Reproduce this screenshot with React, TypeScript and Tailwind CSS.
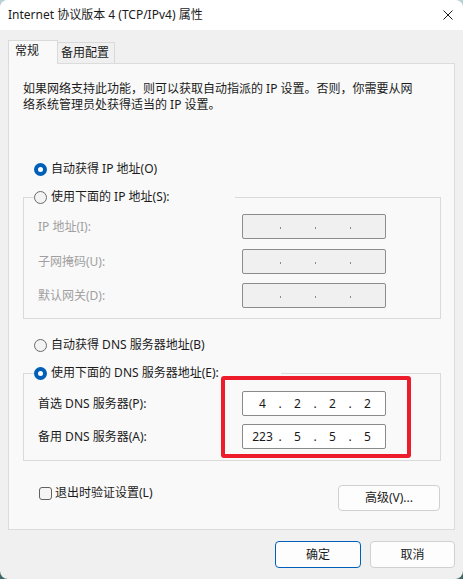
import React from "react";

const FONT = { fontFamily: '"Noto Sans", "Noto Sans CJK SC", sans-serif' };

function Radio({ checked }: { checked?: boolean }) {
  return checked ? (
    <span className="w-[13px] h-[13px] rounded-full bg-[#005fb8] flex items-center justify-center shrink-0">
      <span className="w-[5px] h-[5px] rounded-full bg-white" />
    </span>
  ) : (
    <span className="w-[13px] h-[13px] rounded-full border border-[#6a6a6a] bg-[#f3f3f3] shrink-0" />
  );
}

function IpField({ values, disabled }: { values?: string[]; disabled?: boolean }) {
  const segs = values ?? ["", "", "", ""];
  return (
    <div
      className={
        "w-[144px] h-[25px] rounded-[2px] border flex items-center pl-[4px] " +
        (disabled ? "bg-[#f0f0f0] border-[#8c8c8c]" : "bg-white border-[#8a8a8a]")
      }
    >
      {segs.map((v, i) => (
        <React.Fragment key={i}>
          <span className="w-[31px] text-center text-[12px] leading-[16px] text-[#1b1b1b]">{v}</span>
          {i < 3 &&
            (disabled ? (
              <span className="w-[4px] flex justify-center">
                <span className="w-[1px] h-[2px] bg-[#8a8a8a] mt-[2px]" />
              </span>
            ) : (
              <span className="w-[4px] text-center text-[12px] leading-[16px] text-[#1b1b1b]">.</span>
            ))}
        </React.Fragment>
      ))}
    </div>
  );
}

function Row({ label, disabled, values }: { label: string; disabled?: boolean; values?: string[] }) {
  return (
    <div className="flex items-center pl-[14px] h-[25px]">
      <span className={"w-[204px] text-[12px] leading-[16px] " + (disabled ? "text-[#a0a0a0]" : "text-[#1b1b1b]")}>
        {label}
      </span>
      <IpField values={values} disabled={disabled} />
    </div>
  );
}

export default function App() {
  return (
    <div className="w-[463px] h-[579px] bg-gradient-to-b from-[#b9d2d6] to-[#3d6868]" style={FONT}>
      <div className="w-[463px] h-[579px] rounded-[8px] overflow-hidden bg-[#f0f0f0] flex flex-col text-[#1b1b1b]">
        {/* title bar */}
        <div className="h-[30px] bg-white flex items-center justify-between pl-[8px] pr-[10px] shrink-0">
          <span className="text-[12px] leading-[16px] text-[#1b1b1b]">Internet 协议版本 4 (TCP/IPv4) 属性</span>
          <svg width="10" height="10" viewBox="0 0 10 10" className="mt-[-1px]">
            <path d="M0.5 0.5 L9.5 9.5 M9.5 0.5 L0.5 9.5" stroke="#1b1b1b" strokeWidth="1" fill="none" />
          </svg>
        </div>

        <div className="px-[8px] flex flex-col">
          {/* tabs */}
          <div className="flex items-end mt-[10px] h-[23px]">
            <div className="relative z-10 w-[50px] h-[24px] mb-[-1px] bg-[#f9f9f9] border border-b-0 border-[#d9d9d9] pl-[6px] pt-[2px] text-[12px] leading-[16px]">
              常规
            </div>
            <div className="w-[57px] h-[21px] bg-[#f0f0f0] border border-l-0 border-b-0 border-[#d9d9d9] pl-[3px] pt-[2px] text-[12px] leading-[16px]">
              备用配置
            </div>
          </div>

          {/* panel */}
          <div className="h-[467px] bg-[#f9f9f9] border border-[#dcdcdc] flex flex-col">
            <p className="ml-[14px] mt-[17px] text-[12px] leading-[16px] w-[397px]">
              如果网络支持此功能，则可以获取自动指派的 IP 设置。否则，你需要从网络系统管理员处获得适当的 IP 设置。
            </p>

            <div className="flex items-center gap-[4px] ml-[25px] mt-[48px] h-[16px] text-[12px] leading-[16px]">
              <Radio checked />
              <span>自动获得 IP 地址(O)</span>
            </div>

            <fieldset className="ml-[14px] mt-[12px] w-[418px] border border-[#dadada] m-0 p-0 pb-[10px]">
              <legend className="ml-[10px] w-[201px] h-[16px] flex items-center gap-[4px] text-[12px] leading-[16px] px-0">
                <Radio />
                <span>使用下面的 IP 地址(S):</span>
              </legend>
              <div className="pt-[9px] flex flex-col">
                <Row label="IP 地址(I):" disabled />
                <div className="mt-[10px]">
                  <Row label="子网掩码(U):" disabled />
                </div>
                <div className="mt-[9px]">
                  <Row label="默认网关(D):" disabled />
                </div>
              </div>
            </fieldset>

            <div className="flex items-center gap-[4px] ml-[25px] mt-[18px] h-[16px] text-[12px] leading-[16px]">
              <Radio />
              <span>自动获得 DNS 服务器地址(B)</span>
            </div>

            <fieldset className="ml-[14px] mt-[12px] w-[418px] border border-[#dadada] m-0 p-0 pb-[11px]">
              <legend className="ml-[10px] w-[247px] h-[16px] flex items-center gap-[4px] text-[12px] leading-[16px] px-0">
                <Radio checked />
                <span>使用下面的 DNS 服务器地址(E):</span>
              </legend>
              <div className="relative mt-[10px] flex flex-col gap-[8px]">
                <Row label="首选 DNS 服务器(P):" values={["4", "2", "2", "2"]} />
                <Row label="备用 DNS 服务器(A):" values={["223", "5", "5", "5"]} />
                <div className="absolute left-[197px] top-[-15px] w-[190px] h-[82px] border-[4px] border-[#ec1c2b] rounded-[3px] pointer-events-none" />
              </div>
            </fieldset>

            <div className="flex items-start justify-between mt-[24px] pl-[30px] pr-[14px]">
              <div className="flex items-center gap-[3px] h-[16px] mt-[0px] text-[12px] leading-[16px]">
                <span className="w-[13px] h-[13px] rounded-[3px] border border-[#616161] bg-[#f5f5f5]" />
                <span>退出时验证设置(L)</span>
              </div>
              <button className="w-[102px] h-[26px] rounded-[4px] bg-[#fdfdfd] border border-[#d0d0d0] text-[12px] leading-[16px]">
                高级(V)...
              </button>
            </div>
          </div>

          {/* bottom buttons */}
          <div className="flex justify-end gap-[9px] mt-[11px]">
            <button className="w-[86px] h-[27px] rounded-[4px] bg-[#fdfdfd] border border-[#005fb8] text-[12px] leading-[16px]">
              确定
            </button>
            <button className="w-[85px] h-[27px] rounded-[4px] bg-[#fdfdfd] border border-[#d0d0d0] text-[12px] leading-[16px]">
              取消
            </button>
          </div>
        </div>
      </div>
    </div>
  );
}
